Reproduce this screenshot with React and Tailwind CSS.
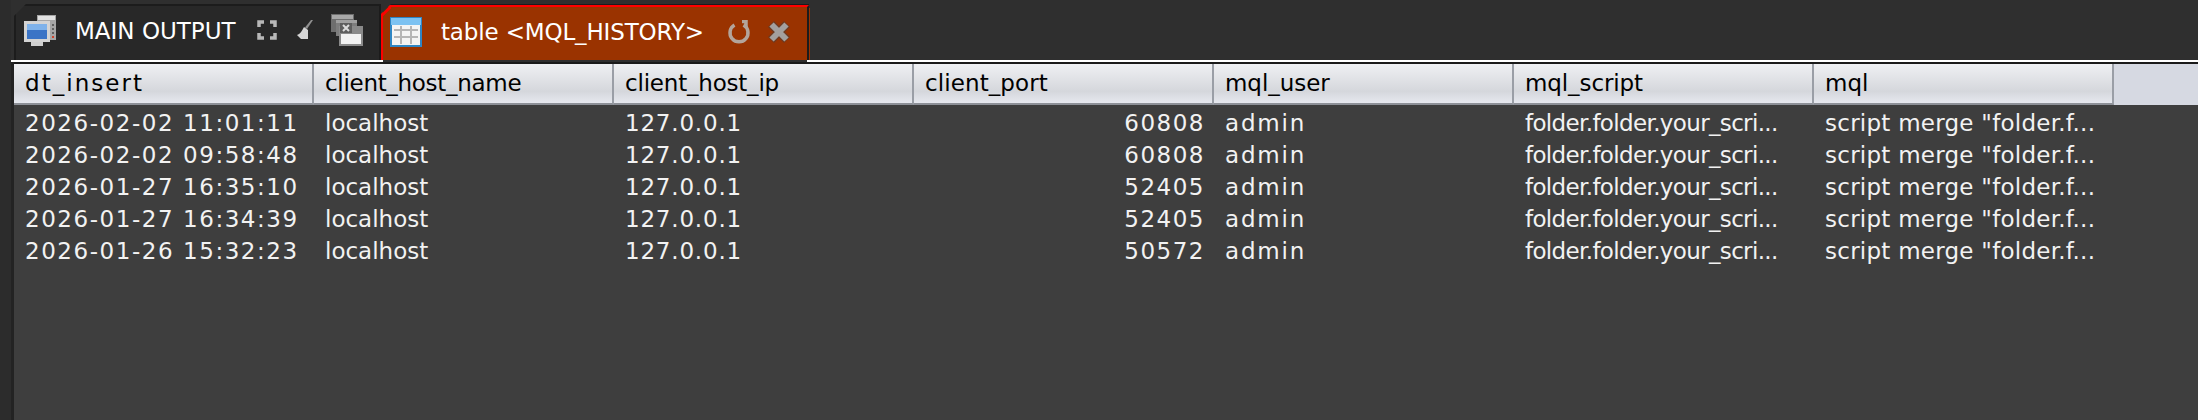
// letter spacing is per column, the reference font has wider digits and hinted advances
const columns = [
  { name: 'dt_insert', tracking: 'tracking-[2.05px]' },
  { name: 'client_host_name', tracking: 'tracking-[-0.3px]' },
  { name: 'client_host_ip', tracking: 'tracking-[-0.2px]' },
  { name: 'client_port', tracking: 'tracking-[0.1px]' },
  { name: 'mql_user', tracking: 'tracking-[-0.05px]' },
  { name: 'mql_script', tracking: 'tracking-[-0.1px]' },
  { name: 'mql', tracking: 'tracking-normal' },
];

const rows = [
  ['2026-02-02 11:01:11', 60808],
  ['2026-02-02 09:58:48', 60808],
  ['2026-01-27 16:35:10', 52405],
  ['2026-01-27 16:34:39', 52405],
  ['2026-01-26 15:32:23', 50572],
];

const font = "font-['DejaVu_Sans',sans-serif]";

const MonitorIcon = () => (
  <svg width="32" height="31" viewBox="0 0 32 31">
    <rect x="13" y="0" width="19" height="25" fill="#a6a6a6" />
    <rect x="14" y="1" width="17" height="4" fill="#e2e2e2" />
    <rect x="28" y="9" width="2" height="2" fill="#5f5f5f" />
    <rect x="28" y="13" width="2" height="2" fill="#5f5f5f" />
    <rect x="28" y="17" width="2" height="2" fill="#5f5f5f" />
    <rect x="28" y="21" width="2" height="2" fill="#d0432c" />
    <rect x="0" y="6" width="26" height="21" fill="#d4d4d4" />
    <rect x="3" y="9" width="20" height="15" fill="#3b74c6" />
    <rect x="3" y="9" width="20" height="6" fill="#7fb2ea" />
    <rect x="7" y="27" width="12" height="4" fill="#cfcfcf" />
  </svg>
);

const ExpandIcon = () => (
  <svg width="20" height="20" viewBox="0 0 20 20" fill="none" stroke="#b8b8b8" strokeWidth="3.5">
    <path d="M2 7V2H7M13 2H18V7M18 13V18H13M7 18H2V13" />
  </svg>
);

const BroomIcon = () => (
  <svg width="16" height="20" viewBox="0 0 16 20">
    <path d="M16 0L10 9L8 7.5L14 0Z" fill="#8f8f8f" />
    <path d="M7 7L11 10L11 19L4 19L0 15C3 14 5 11 7 7Z" fill="#d6d6d6" />
  </svg>
);

const WindowsIcon = () => (
  <svg width="32" height="32" viewBox="0 0 32 32">
    <rect x="0" y="0" width="23" height="18" fill="#6e6e6e" />
    <rect x="1" y="1" width="21" height="4" fill="#a8a8a8" />
    <rect x="5" y="6" width="21" height="16" fill="#7d7d7d" />
    <rect x="5" y="6" width="21" height="3" fill="#a0a0a0" />
    <rect x="8" y="12" width="24" height="20" fill="#8a8a8a" />
    <rect x="10" y="20" width="20" height="10" fill="#f2f2f2" />
    <rect x="9" y="9" width="12" height="10" fill="#5e5e5e" />
    <path d="M12 11L18 17M18 11L12 17" stroke="#dcdcdc" strokeWidth="2" />
  </svg>
);

const TableIcon = () => (
  <svg width="32" height="30" viewBox="0 0 32 30">
    <rect x="0" y="0" width="32" height="30" fill="#2f86c4" />
    <rect x="1" y="1" width="30" height="7" fill="#7cc2f2" />
    <rect x="2" y="8" width="28" height="20" fill="#f4f4f4" />
    <path d="M4 13H28M4 20H28M11 9V27M21 9V27" stroke="#b5b5b5" strokeWidth="2" />
  </svg>
);

const ReloadIcon = () => (
  <svg width="24" height="24" viewBox="0 0 24 24" fill="none" stroke="#b3a59b" strokeWidth="3.5">
    <path d="M7.5 5A9 9 0 1 0 16.5 5" />
    <path d="M15 1.5H19V7" strokeWidth="3.5" />
  </svg>
);

const CloseIcon = () => (
  <svg width="24" height="24" viewBox="0 0 24 24" fill="none">
    <path d="M4 4L20 20M20 4L4 20" stroke="#6e3a20" strokeWidth="8.5" />
    <path d="M4.5 4.5L19.5 19.5M19.5 4.5L4.5 19.5" stroke="#a3a09e" strokeWidth="6" />
  </svg>
);

export default function App() {
  return (
    <div className={`flex h-[420px] w-[2198px] overflow-hidden bg-[#2c2c2c] ${font}`}>
      <div className="w-[11px] shrink-0 bg-[#2c2c2c]" />
      <div className="flex min-w-0 flex-1 flex-col bg-[#3e3e3e]">
        {/* Tabs */}
        <div className="flex h-[60px] shrink-0 items-end bg-[#2f2f2f] pl-[3px]">
          <div className="flex h-[56px] w-[367px] items-center border-2 border-b-0 border-[#1c1c1c] bg-[#282828] pl-[8px] text-white [clip-path:polygon(12px_0,100%_0,100%_100%,0_100%,0_12px)]">
            <span className="-mt-[6px]"><MonitorIcon /></span>
            <span className="ml-[19px] -mt-[3px] text-[23px] leading-none">MAIN OUTPUT</span>
            <span className="ml-[21px] -mt-[6px]"><ExpandIcon /></span>
            <span className="ml-[20px] -mt-[6px]"><BroomIcon /></span>
            <span className="ml-[18px] -mt-[6px]"><WindowsIcon /></span>
          </div>
          <div className="h-[56px] w-[428px] bg-[#1c1c1c] pt-px [clip-path:polygon(10px_0,100%_0,100%_100%,0_100%,0_10px)]">
            <div className="relative flex h-[55px] items-center border-t-2 border-l-2 border-r-2 border-t-[#ff0000] border-l-[#ff0000] border-r-[#1c1c1c] bg-[#9a3300] pl-[7px] text-white">
              <span className="-mt-[4px]"><TableIcon /></span>
              <span className="ml-[19px] -mt-[3px] text-[23px] leading-none tracking-[-0.15px]">table &lt;MQL_HISTORY&gt;</span>
              <span className="ml-[23px] -mt-[4px]"><ReloadIcon /></span>
              <span className="ml-[16px] -mt-[4px]"><CloseIcon /></span>
              <svg className="absolute -left-[2px] -top-[2px]" width="12" height="12" viewBox="0 0 12 12">
                <path d="M0 11.5L9.5 2" stroke="#ff0000" strokeWidth="2.5" />
              </svg>
            </div>
          </div>
          <div className="h-[52px] w-px bg-[#9a3300]" />
        </div>
        <div className="flex h-[2px] shrink-0 bg-white">
          <div className="ml-[372px] w-[424px] bg-[#2f2f2f]" />
        </div>
        <div className="flex min-h-0 flex-1 border-l-[3px] border-[#232323]">
          <div className="min-w-0 flex-1">
            {/* Header */}
            <div className="h-[2px] bg-[#1a1a1a]" />
            <div className="flex h-[41px] bg-[#d6d9e2]">
              {columns.map(({ name, tracking }) => (
                <div
                  key={name}
                  className={`flex h-full w-[300px] shrink-0 items-center border-r-2 border-b-2 border-r-[#9a9ea6] border-b-[#8d9097] bg-gradient-to-b from-[#eff0f3] via-[#d5d7dc] via-70% to-[#e6e8ef] pl-[11px] text-[23px] leading-none text-black ${tracking}`}
                >
                  {name}
                </div>
              ))}
            </div>
            {/* Rows */}
            <div className="pt-[2px] text-[23px] leading-none text-[#f2f2f2]">
              {rows.map(([date, port]) => (
                <div key={date} className="flex h-[32px] items-center">
                  <div className="w-[300px] shrink-0 pl-[11px] tracking-[1.55px]">{date}</div>
                  <div className="w-[300px] shrink-0 pl-[11px]">localhost</div>
                  <div className="w-[300px] shrink-0 pl-[11px] tracking-[0.8px]">127.0.0.1</div>
                  <div className="w-[300px] shrink-0 pr-[9px] text-right tracking-[1.5px]">{port}</div>
                  <div className="w-[300px] shrink-0 pl-[11px] tracking-[1.8px]">admin</div>
                  <div className="w-[300px] shrink-0 pl-[11px] tracking-[-0.65px]">folder.folder.your_scri...</div>
                  <div className="w-[300px] shrink-0 pl-[11px] tracking-[0.25px]">script merge "folder.f...</div>
                </div>
              ))}
            </div>
          </div>
        </div>
      </div>
    </div>
  );
}
